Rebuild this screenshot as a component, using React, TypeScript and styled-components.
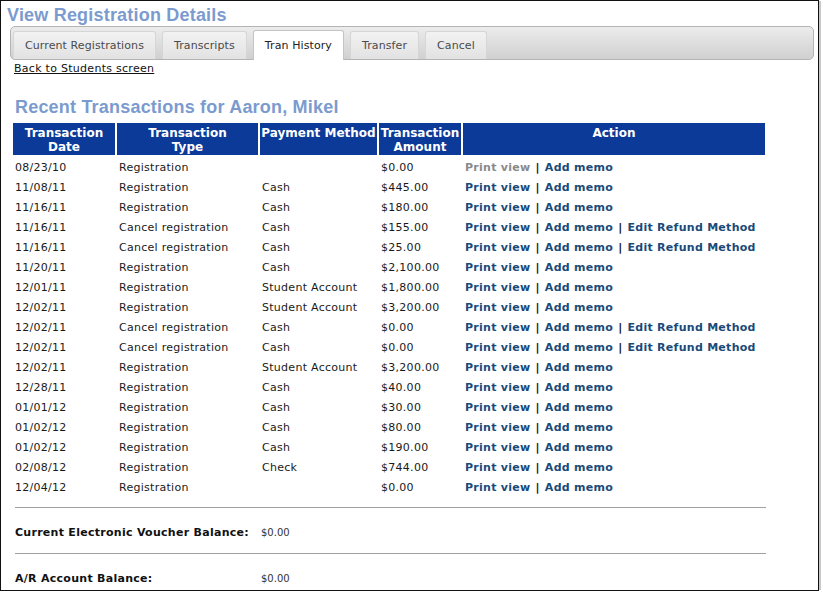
import React from "react";
import styled, { createGlobalStyle } from "styled-components";

const GlobalStyle = createGlobalStyle`
  html, body {
    margin: 0;
    padding: 0;
    background: #ffffff;
  }
  body {
    font-family: "DejaVu Sans", Verdana, sans-serif;
  }
`;

const Frame = styled.div`
  width: 817px;
  height: 589px;
  border: 1px solid #111;
  box-shadow: 3px 0 0 -1px #c8c8c8;
  overflow: hidden;
  background: #fff;
`;

const PageTitle = styled.h1`
  margin: 0;
  padding: 4px 0 0 6px;
  height: 21px;
  font-family: "Liberation Sans", Arial, sans-serif;
  font-size: 18px;
  font-weight: bold;
  letter-spacing: 0.2px;
  color: #7b9bcf;
  line-height: 20px;
`;

const TabBar = styled.div`
  margin: 0 4px 0 9px;
  height: 34px;
  border: 1px solid #b4b4b4;
  border-radius: 5px;
  background: linear-gradient(#ececec, #d0d0d0);
  display: flex;
  align-items: flex-end;
  gap: 6px;
  padding: 0 0 0 2px;
  box-sizing: border-box;
`;

const Tab = styled.div<{ $active?: boolean }>`
  height: ${(p) => (p.$active ? "30px" : "28px")};
  margin-bottom: ${(p) => (p.$active ? "-1px" : "0")};
  padding: 0 11px;
  box-sizing: border-box;
  display: flex;
  align-items: center;
  font-size: 11px;
  letter-spacing: 0.1px;
  color: ${(p) => (p.$active ? "#222" : "#4a4a4a")};
  background: ${(p) => (p.$active ? "#ffffff" : "linear-gradient(#f2f2f2, #e2e2e2)")};
  border: 1px solid ${(p) => (p.$active ? "#c4c4c4" : "#d6d6d6")};
  border-bottom: none;
  border-radius: 3px 3px 0 0;
`;

const Content = styled.div`
  padding: 0 0 0 13px;
`;

const BackLink = styled.a`
  display: block;
  width: max-content;
  font-size: 11px;
  letter-spacing: 0.28px;
  color: #111;
  text-decoration: underline;
  line-height: 13px;
  margin-top: 2px;
`;

const SectionTitle = styled.h2`
  margin: 22px 0 0 1px;
  font-family: "Liberation Sans", Arial, sans-serif;
  font-size: 18px;
  font-weight: bold;
  letter-spacing: 0.2px;
  color: #7b9bcf;
  line-height: 20px;
`;

const Table = styled.table`
  border-collapse: separate;
  border-spacing: 2px 0;
  margin: 6px 0 0 -3px;
  font-size: 11px;
  letter-spacing: 0.28px;
  color: #1a1a1a;
`;

const HeadCell = styled.th<{ $w: number }>`
  width: ${(p) => p.$w}px;
  height: 35px;
  padding: 3px 0 0;
  background: #0b3a98;
  background-clip: padding-box;
  border-bottom: 3px solid #fff;
  color: #fff;
  font-size: 12px;
  font-weight: bold;
  line-height: 14px;
  letter-spacing: 0;
  text-align: center;
  vertical-align: top;
  box-sizing: border-box;
`;

const Cell = styled.td`
  height: 20px;
  padding: 0 0 0 2px;
  white-space: nowrap;
  line-height: 20px;
`;

const ActionLink = styled.a<{ $muted?: boolean }>`
  font-weight: bold;
  color: ${(p) => (p.$muted ? "#8a8a8a" : "#1a4a78")};
  text-decoration: none;
`;

const Sep = styled.span`
  font-weight: bold;
  color: #111;
  margin: 0 5px;
`;

const Rule = styled.div<{ $top?: number }>`
  width: 751px;
  height: 1px;
  background: #a0a0a0;
  margin: ${(p) => p.$top ?? 0}px 0 0 1px;
`;

const BalanceRow = styled.div`
  display: flex;
  align-items: center;
  height: 45px;
  padding: 4px 0 0 1px;
  box-sizing: border-box;
`;

const BalanceLabel = styled.span`
  width: 246px;
  font-size: 11px;
  letter-spacing: 0.28px;
  font-weight: bold;
  color: #111;
`;

const BalanceValue = styled.span`
  font-size: 10px;
  color: #333;
`;

type Row = [string, string, string, string, boolean?];

const rows: Row[] = [
  ["08/23/10", "Registration", "", "$0.00"],
  ["11/08/11", "Registration", "Cash", "$445.00"],
  ["11/16/11", "Registration", "Cash", "$180.00"],
  ["11/16/11", "Cancel registration", "Cash", "$155.00", true],
  ["11/16/11", "Cancel registration", "Cash", "$25.00", true],
  ["11/20/11", "Registration", "Cash", "$2,100.00"],
  ["12/01/11", "Registration", "Student Account", "$1,800.00"],
  ["12/02/11", "Registration", "Student Account", "$3,200.00"],
  ["12/02/11", "Cancel registration", "Cash", "$0.00", true],
  ["12/02/11", "Cancel registration", "Cash", "$0.00", true],
  ["12/02/11", "Registration", "Student Account", "$3,200.00"],
  ["12/28/11", "Registration", "Cash", "$40.00"],
  ["01/01/12", "Registration", "Cash", "$30.00"],
  ["01/02/12", "Registration", "Cash", "$80.00"],
  ["01/02/12", "Registration", "Cash", "$190.00"],
  ["02/08/12", "Registration", "Check", "$744.00"],
  ["12/04/12", "Registration", "", "$0.00"],
];

const tabs = ["Current Registrations", "Transcripts", "Tran History", "Transfer", "Cancel"];

export default function App() {
  return (
    <>
      <GlobalStyle />
      <Frame>
        <PageTitle>View Registration Details</PageTitle>
        <TabBar>
          {tabs.map((t) => (
            <Tab key={t} $active={t === "Tran History"}>
              {t}
            </Tab>
          ))}
        </TabBar>
        <Content>
          <BackLink href="#">Back to Students screen</BackLink>
          <SectionTitle>Recent Transactions for Aaron, Mikel</SectionTitle>
          <Table>
            <thead>
              <tr>
                <HeadCell $w={102}>Transaction<br />Date</HeadCell>
                <HeadCell $w={141}>Transaction<br />Type</HeadCell>
                <HeadCell $w={117}>Payment Method</HeadCell>
                <HeadCell $w={82}>Transaction<br />Amount</HeadCell>
                <HeadCell $w={302}>Action</HeadCell>
              </tr>
            </thead>
            <tbody>
              {rows.map(([date, type, method, amount, refund], i) => (
                <tr key={i}>
                  <Cell>{date}</Cell>
                  <Cell>{type}</Cell>
                  <Cell>{method}</Cell>
                  <Cell>{amount}</Cell>
                  <Cell>
                    <ActionLink href="#" $muted={i === 0}>Print view</ActionLink>
                    <Sep>|</Sep>
                    <ActionLink href="#">Add memo</ActionLink>
                    {refund && (
                      <>
                        <Sep>|</Sep>
                        <ActionLink href="#">Edit Refund Method</ActionLink>
                      </>
                    )}
                  </Cell>
                </tr>
              ))}
            </tbody>
          </Table>
          <Rule $top={9} />
          <BalanceRow>
            <BalanceLabel>Current Electronic Voucher Balance:</BalanceLabel>
            <BalanceValue>$0.00</BalanceValue>
          </BalanceRow>
          <Rule />
          <BalanceRow>
            <BalanceLabel>A/R Account Balance:</BalanceLabel>
            <BalanceValue>$0.00</BalanceValue>
          </BalanceRow>
        </Content>
      </Frame>
    </>
  );
}
